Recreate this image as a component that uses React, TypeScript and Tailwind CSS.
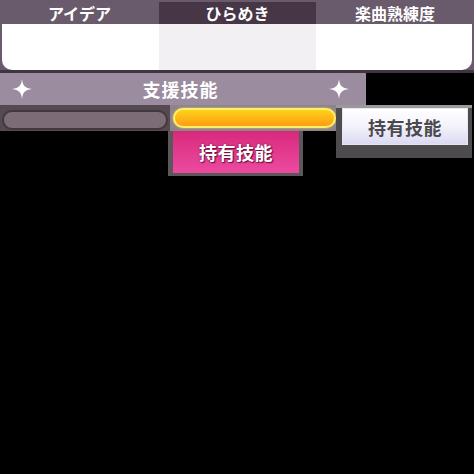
import React from "react";

const Sparkle = () => (
  <svg width="22" height="22" viewBox="0 0 22 22">
    <path d="M11 1 C11.8 7.5 13.5 10 21 11 C13.5 12 11.8 14.5 11 21 C10.2 14.5 8.5 12 1 11 C8.5 10 10.2 7.5 11 1 Z" fill="#ffffff" />
  </svg>
);

const tabs = ["アイデア", "ひらめき", "楽曲熟練度"];

export default function App() {
  return (
    <div className="w-[474px] h-[474px] bg-black overflow-hidden font-['Noto_Sans_CJK_JP','Noto_Sans',sans-serif]">
      {/* Tabs + panel */}
      <div className="bg-[#695a6c] h-[70px] flex flex-col">
        <div className="grid grid-cols-[159px_157px_158px] h-[24px] pt-[2px]">
          {tabs.map((t, i) => (
            <div
              key={t}
              className={
                "flex items-center justify-center text-white font-bold text-[16px] leading-none " +
                (i === 1 ? "bg-[#463646]" : "")
              }
            >
              {t}
            </div>
          ))}
        </div>
        <div className="mx-[2px] flex-1 bg-white rounded-b-[10px] grid grid-cols-[157px_157px_1fr] overflow-hidden">
          <div />
          <div className="bg-[#f3f0f4]" />
          <div />
        </div>
      </div>
      <div className="h-[3px] w-[474px] bg-[#3f343f]" />

      {/* Support skill band */}
      <div className="w-[366px] h-[32px] bg-[#9b8c9f] flex items-center justify-between pl-[11px] pr-[16px]">
        <Sparkle />
        <span className="text-white font-bold text-[18px] leading-none tracking-[1px]">支援技能</span>
        <Sparkle />
      </div>

      {/* Bars + buttons */}
      <div className="flex">
        <div className="w-[336px] flex flex-col">
          <div className="flex h-[26px]">
            <div className="w-[170px] bg-[#554a52] pt-[5px] pl-[2px] pr-[2px]">
              <div className="h-[20px] rounded-full bg-[#7b6c75] border-[2px] border-[#43383f]" />
            </div>
            <div className="flex-1 bg-[#8d8489] pt-[3px] pl-[3px]">
              <div className="h-[20px] rounded-full bg-gradient-to-b from-[#ffd21a] to-[#ff9c14] border-[2px] border-[#fff06a] shadow-[0_0_2px_#ffe45a]" />
            </div>
          </div>
          <div className="ml-[168px] w-[135px] h-[45px] bg-[#5b575b] pl-[5px] pr-[4px] pb-[3px]">
            <div className="h-full bg-gradient-to-b from-[#d8287c] to-[#ec4aa0] flex items-center justify-center">
              <span className="text-white font-bold text-[18px] leading-none tracking-[0.5px] [text-shadow:0_0_2px_#6a1040,1px_1px_1px_#6a1040]">
                持有技能
              </span>
            </div>
          </div>
        </div>
        <div className="w-[136px] h-[53px] bg-[#4e4b4e] border-t-[3px] border-[#9c999c] pl-[6px] pr-[4px] pb-[13px]">
          <div className="h-full bg-gradient-to-b from-[#ffffff] via-[#f3f2fb] to-[#dcdaf2] border border-[#e8e6f0] flex items-center justify-center">
            <span className="text-[#4a4a4e] font-bold text-[18px] leading-none tracking-[0.5px]">持有技能</span>
          </div>
        </div>
      </div>
    </div>
  );
}
